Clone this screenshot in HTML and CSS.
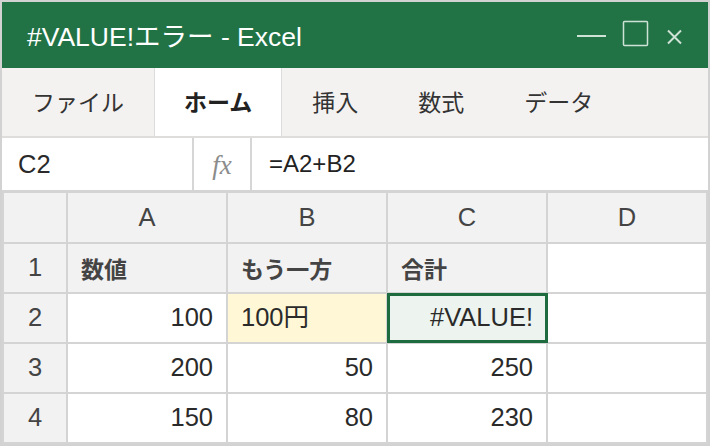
FILE: index.html
```html
<!DOCTYPE html>
<html lang="ja">
<head>
<meta charset="utf-8">
<title>#VALUE!エラー - Excel</title>
<link rel="stylesheet" href="styles.css">
</head>
<body>
<div class="window">
  <div class="titlebar">
    <span class="title">#VALUE!エラー - Excel</span>
    <svg class="controls" width="120" height="66" viewBox="0 0 120 66" aria-hidden="true">
      <line x1="7" y1="34" x2="36" y2="34" stroke="#cfe2d6" stroke-width="2"/>
      <rect x="53.5" y="19.5" width="24" height="24" rx="1" fill="none" stroke="#cfe2d6" stroke-width="1.5"/>
      <path d="M98 28.5 L111 41.5 M111 28.5 L98 41.5" stroke="#cfe2d6" stroke-width="2" fill="none"/>
    </svg>
  </div>
  <div class="ribbon">
    <div class="tab">ファイル</div>
    <div class="tab active">ホーム</div>
    <div class="tab">挿入</div>
    <div class="tab">数式</div>
    <div class="tab">データ</div>
  </div>
  <div class="formulabar">
    <div class="namebox">C2</div>
    <div class="fx">fx</div>
    <div class="expr">=A2+B2</div>
  </div>
  <div class="grid">
    <div class="cell head"></div>
    <div class="cell head center">A</div>
    <div class="cell head center">B</div>
    <div class="cell head center">C</div>
    <div class="cell head center">D</div>

    <div class="cell head center">1</div>
    <div class="cell label">数値</div>
    <div class="cell label">もう一方</div>
    <div class="cell label">合計</div>
    <div class="cell"></div>

    <div class="cell head center">2</div>
    <div class="cell num">100</div>
    <div class="cell text warn">100円</div>
    <div class="cell num selected">#VALUE!<span class="sel-frame"></span></div>
    <div class="cell"></div>

    <div class="cell head center">3</div>
    <div class="cell num">200</div>
    <div class="cell num">50</div>
    <div class="cell num">250</div>
    <div class="cell"></div>

    <div class="cell head center">4</div>
    <div class="cell num">150</div>
    <div class="cell num">80</div>
    <div class="cell num">230</div>
    <div class="cell"></div>
  </div>
</div>
</body>
</html>
```
FILE: styles.css
```css
* { box-sizing: border-box; }
html, body { margin: 0; padding: 0; }
body {
  font-family: "Liberation Sans", "Noto Sans CJK JP", sans-serif;
  color: #333;
  background: #ffffff;
}
.window {
  width: 710px;
  height: 446px;
  border: 2px solid #d2d2d2;
  display: flex;
  flex-direction: column;
  overflow: hidden;
}
.titlebar {
  height: 66px;
  flex: none;
  background: #217346;
  display: flex;
  align-items: center;
  justify-content: space-between;
  padding-left: 25px;
  padding-right: 18px;
}
.title {
  color: #ffffff;
  font-size: 26.5px;
  line-height: 1;
  padding-top: 4px;
}
.controls { display: block; }
.ribbon {
  height: 70px;
  flex: none;
  background: #f3f2f1;
  border-bottom: 2px solid #dedddc;
  display: flex;
}
.tab {
  padding: 0 30px 2px 30px;
  font-family: "Noto Sans CJK JP", sans-serif;
  font-size: 23px;
  color: #333;
  display: flex;
  align-items: center;
}
.tab.active {
  background: #ffffff;
  font-weight: 700;
  color: #222;
  border-left: 1px solid #dcdcdc;
  border-right: 1px solid #dcdcdc;
  padding: 0 29px 2px 29px;
}
.formulabar {
  height: 52px;
  flex: none;
  background: #ffffff;
  display: flex;
}
.namebox {
  width: 192px;
  border-right: 2px solid #d6d6d6;
  padding-left: 16px;
  font-size: 25.5px;
  color: #2a2a2a;
  display: flex;
  align-items: center;
}
.fx {
  width: 58px;
  border-right: 2px solid #d6d6d6;
  font-family: "Liberation Serif", serif;
  font-style: italic;
  color: #8c8c8c;
  font-size: 27px;
  display: flex;
  align-items: center;
  justify-content: center;
  padding-top: 2px;
}
.expr {
  flex: 1;
  padding-left: 17px;
  font-size: 24px;
  color: #222;
  display: flex;
  align-items: center;
}
.grid {
  flex: 1;
  background: #d4d4d4;
  padding: 3px 2px 2px 2px;
  display: grid;
  grid-template-columns: 62px repeat(4, 158px);
  grid-template-rows: 49px repeat(4, 48px);
  gap: 2px;
}
.cell {
  background: #ffffff;
  display: flex;
  align-items: center;
  padding: 0 13px;
  font-size: 25.5px;
  line-height: 1.15;
  color: #2a2a2a;
  position: relative;
}
.cell.head {
  background: #f2f2f2;
  color: #444;
}
.cell.center { justify-content: center; padding: 0; }
.cell.label {
  background: #f2f2f2;
  font-family: "Noto Sans CJK JP", sans-serif;
  font-size: 23px;
  font-weight: 700;
  color: #444;
}
.cell.num { justify-content: flex-end; }
.cell.warn { background: #fff7d6; }
.cell.selected { background: #edf3ee; }
.sel-frame {
  position: absolute;
  top: -1px;
  bottom: -1px;
  left: -1px;
  right: -2px;
  border: 3px solid #1e6b40;
  pointer-events: none;
}
```
